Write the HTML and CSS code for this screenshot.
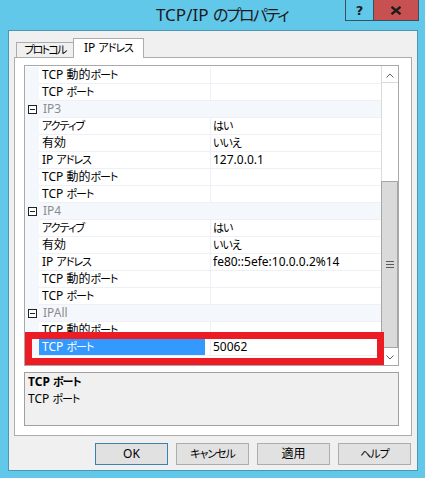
FILE: index.html
```html
<!DOCTYPE html>
<html lang="ja">
<head>
<meta charset="utf-8">
<title>TCP/IP のプロパティ</title>
<link rel="stylesheet" href="styles.css">
</head>
<body>
<div class="titlebar">
  <div class="title">TCP/IP <span class="kt">のプロパティ</span></div>
  <div class="caption-btns">
    <div class="cb help">?</div>
    <div class="cb close">
      <svg width="12" height="9" viewBox="0 0 12 9"><path d="M1.5 0.8 L10.5 8.2 M10.5 0.8 L1.5 8.2" stroke="#1c1c1c" stroke-width="2.3" fill="none"/></svg>
    </div>
  </div>
</div>
<div class="client">
  <div class="tabs">
    <div class="tab"><span class="kw">プロトコル</span></div>
    <div class="tab active">IP <span class="k">アドレス</span></div>
  </div>
  <div class="panel">
    <div class="pgrid">
      <div class="rows">
        <div class="row"><div class="gut"></div><div class="lab">TCP 動的<span class="k">ポート</span></div><div class="val"></div></div>
        <div class="row"><div class="gut"></div><div class="lab">TCP <span class="k">ポート</span></div><div class="val"></div></div>
        <div class="row cat"><div class="gut"><span class="minus"></span></div><div class="catname">IP3</div></div>
        <div class="row"><div class="gut"></div><div class="lab"><span class="k">アクティブ</span></div><div class="val"><span class="k">はい</span></div></div>
        <div class="row"><div class="gut"></div><div class="lab">有効</div><div class="val"><span class="k">いいえ</span></div></div>
        <div class="row"><div class="gut"></div><div class="lab">IP <span class="k">アドレス</span></div><div class="val">127.0.0.1</div></div>
        <div class="row"><div class="gut"></div><div class="lab">TCP 動的<span class="k">ポート</span></div><div class="val"></div></div>
        <div class="row"><div class="gut"></div><div class="lab">TCP <span class="k">ポート</span></div><div class="val"></div></div>
        <div class="row cat"><div class="gut"><span class="minus"></span></div><div class="catname">IP4</div></div>
        <div class="row"><div class="gut"></div><div class="lab"><span class="k">アクティブ</span></div><div class="val"><span class="k">はい</span></div></div>
        <div class="row"><div class="gut"></div><div class="lab">有効</div><div class="val"><span class="k">いいえ</span></div></div>
        <div class="row"><div class="gut"></div><div class="lab">IP <span class="k">アドレス</span></div><div class="val">fe80::5efe:10.0.0.2%14</div></div>
        <div class="row"><div class="gut"></div><div class="lab">TCP 動的<span class="k">ポート</span></div><div class="val"></div></div>
        <div class="row"><div class="gut"></div><div class="lab">TCP <span class="k">ポート</span></div><div class="val"></div></div>
        <div class="row cat"><div class="gut"><span class="minus"></span></div><div class="catname">IPAll</div></div>
        <div class="row"><div class="gut"></div><div class="lab">TCP 動的<span class="k">ポート</span></div><div class="val"></div></div>
        <div class="row"><div class="gut"></div><div class="lab"><div class="selbar">TCP <span class="k">ポート</span></div></div><div class="val">50062</div></div>
      </div>
      <div class="vscroll">
        <div class="sb-btn sb-up"><svg width="8" height="5" viewBox="0 0 8 5"><path d="M0.5 4.5 L4 1 L7.5 4.5" stroke="#606060" stroke-width="1" fill="none"/></svg></div>
        <div class="sb-track"></div>
        <div class="sb-thumb"><svg width="8" height="7" viewBox="0 0 8 7"><path d="M0 0.5 H8 M0 3.5 H8 M0 6.5 H8" stroke="#5a5a5a" stroke-width="1"/></svg></div>
        <div class="sb-btn sb-down"><svg width="8" height="5" viewBox="0 0 8 5"><path d="M0.5 0.5 L4 4 L7.5 0.5" stroke="#606060" stroke-width="1" fill="none"/></svg></div>
      </div>
      <div class="mark"></div>
    </div>
    <div class="desc">
      <div class="desc-title">TCP <span class="k">ポート</span></div>
      <div class="desc-text">TCP <span class="k">ポート</span></div>
    </div>
  </div>
  <div class="buttons">
    <div class="btn def">OK</div>
    <div class="btn"><span class="k">キャンセル</span></div>
    <div class="btn">適用</div>
    <div class="btn"><span class="k">ヘルプ</span></div>
  </div>
</div>
</body>
</html>
```
FILE: styles.css
```css
* { box-sizing: border-box; }
html, body { margin: 0; padding: 0; }
body {
  width: 425px;
  height: 478px;
  overflow: hidden;
  background: #62c8ea;
  font-family: "Noto Sans", "Noto Sans CJK JP", sans-serif;
  font-size: 12px;
  font-feature-settings: "palt";
  color: #000;
}

/* narrower kana, like Meiryo UI */
.k { font-size: 11px; letter-spacing: -1px; }
.kw { font-size: 11px; letter-spacing: -1.8px; }
.kt { font-size: 16px; letter-spacing: -2px; }

/* title bar */
.titlebar {
  height: 30px;
  display: flex;
  align-items: flex-start;
}
.title {
  padding-left: 156px;
  font-size: 17px;
  line-height: 30px;
  color: #1a1a1a;
  white-space: nowrap;
}
.caption-btns {
  margin-left: auto;
  margin-right: 6px;
  display: flex;
  height: 21px;
  border: 1px solid #35525e;
  border-top: none;
}
.cb {
  height: 20px;
  display: flex;
  align-items: center;
  justify-content: center;
}
.help {
  width: 27px;
  font-weight: bold;
  font-size: 13px;
  color: #1c1c1c;
  font-family: "DejaVu Sans", sans-serif;
}
.close {
  width: 45px;
  border-left: 1px solid #35525e;
  background: #c75050;
}

/* client area */
.client {
  margin-left: 8px;
  width: 410px;
  height: 441px;
  background: #f0f0f0;
  border: 1px solid #4d97b2;
  padding: 7px 5px 5px 5px;
}

.tabs {
  display: flex;
  align-items: flex-end;
  height: 19px;
  padding-left: 2px;
}
.tab {
  width: 58px;
  height: 15px;
  border: 1px solid #acacac;
  border-bottom: none;
  background: #f0f0f0;
  text-align: center;
  line-height: 14px;
  white-space: nowrap;
}
.tab.active {
  width: 71px;
  height: 20px;
  margin-left: -1px;
  margin-bottom: -1px;
  background: #fff;
  line-height: 17px;
  position: relative;
  z-index: 1;
}

.panel {
  height: 379px;
  border: 1px solid #acacac;
  background: #fff;
  padding: 7px 12px 9px 9px;
}

/* property grid */
.pgrid {
  position: relative;
  height: 301px;
  border: 1px solid #a9a9a9;
  display: flex;
  background: #fff;
}
.rows {
  width: 356px;
  padding-top: 1px;
  overflow: hidden;
}
.row {
  display: flex;
  height: 17px;
}
.gut {
  width: 14px;
  flex: none;
  background: #f4f7fc;
  position: relative;
}
.lab {
  width: 171px;
  flex: none;
  border-bottom: 1px solid #edf0f5;
  padding-left: 3px;
  line-height: 16px;
  white-space: nowrap;
  overflow: hidden;
}
.val {
  width: 171px;
  flex: none;
  border-left: 1px solid #edf0f5;
  border-bottom: 1px solid #edf0f5;
  padding-left: 2px;
  line-height: 16px;
  white-space: nowrap;
}
.row.cat {
  background: #f4f7fc;
}
.catname {
  width: 342px;
  padding-left: 4px;
  line-height: 16px;
  color: #8c8c8c;
  border-bottom: 1px solid #edf0f5;
}
.minus {
  display: block;
  width: 9px;
  height: 9px;
  margin: 4px 0 0 3px;
  border: 1px solid #222;
  background: #fff;
  position: relative;
}
.minus::after {
  content: "";
  position: absolute;
  left: 1px;
  top: 3px;
  width: 5px;
  height: 1px;
  background: #222;
}
.selbar {
  width: 166px;
  height: 16px;
  margin-left: -3px;
  padding-left: 3px;
  background: #3399ff;
  color: #fff;
}

/* scrollbar */
.vscroll {
  width: 17px;
  border-left: 1px solid #dadada;
  display: flex;
  flex-direction: column;
}
.sb-btn {
  height: 17px;
  display: flex;
  align-items: center;
  justify-content: center;
}
.sb-up {
  border-bottom: 1px solid #dadada;
  padding-top: 2px;
}
.sb-track {
  height: 98px;
}
.sb-thumb {
  height: 167px;
  width: 17px;
  margin-left: -1px;
  background: #dadada;
  border: 1px solid #a6a6a6;
  display: flex;
  align-items: center;
  justify-content: center;
}
.sb-down {
  padding-top: 1px;
}

/* red annotation */
.mark {
  position: absolute;
  left: 0;
  top: 266px;
  width: 359px;
  height: 33px;
  border: 7px solid #ed1c24;
}

/* description */
.desc {
  margin-top: 6px;
  height: 54px;
  border: 1px solid #a0a0a0;
  background: #f0f0f0;
  padding: 0 3px;
  line-height: 17px;
}
.desc-title {
  font-weight: bold;
}

/* buttons */
.buttons {
  display: flex;
  justify-content: flex-end;
  gap: 8px;
  margin-top: 7px;
  margin-right: 1px;
}
.btn {
  width: 73px;
  height: 22px;
  border: 1px solid #adadad;
  background: #e1e1e1;
  text-align: center;
  line-height: 20px;
  white-space: nowrap;
}
.btn.def {
  border-color: #3c7fb1;
}
```
